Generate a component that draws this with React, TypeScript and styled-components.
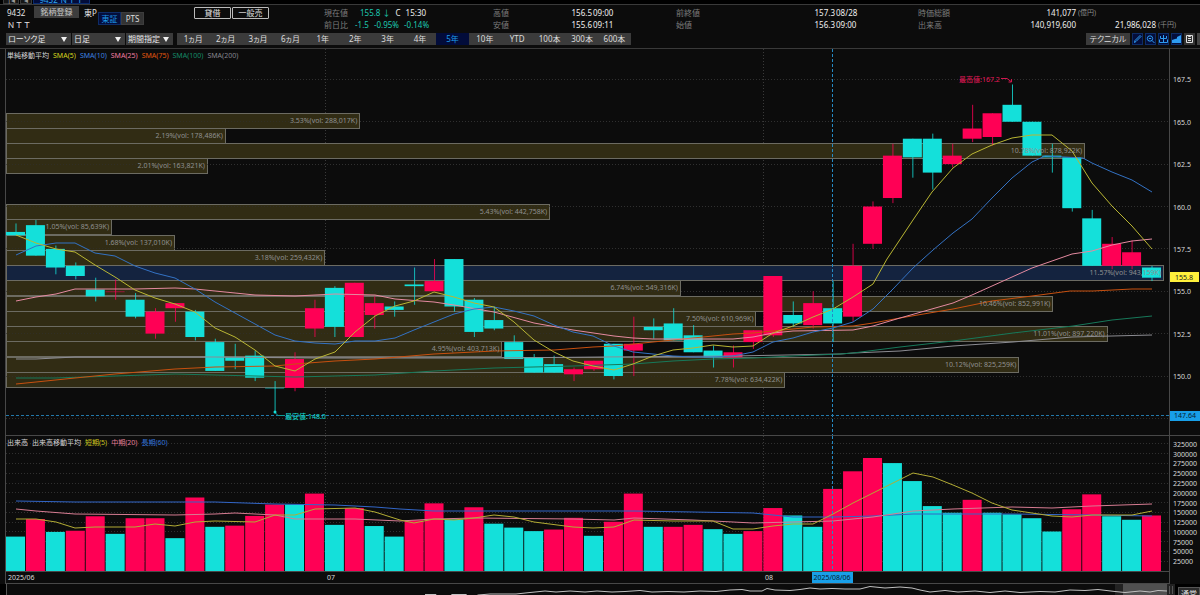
import React, { useState } from "react";
import styled, { createGlobalStyle } from "styled-components";

const UP = "#ff0055";
const DOWN = "#14e0da";
const QUOTE_DOWN = "#1cc8b0";

const GlobalStyle = createGlobalStyle`
  body {
    margin: 0;
    background: #0c0c0c;
    color: #e4e4e4;
    font-family: "Noto Sans", "Noto Sans CJK JP", sans-serif;
    font-size: 8px;
    line-height: 12px;
  }

  button,
  select {
    font: inherit;
    margin: 0;
  }
`;

const Page = styled.main`
  overflow: hidden;
`;

const TabStrip = styled.nav`
  display: flex;
  align-items: flex-end;
  gap: 1px;
  height: 4px;
  padding-left: 3px;
  overflow: hidden;
  background: #000;
  border-bottom: 1px solid #3a3a3a;
`;

const StripTab = styled.button<{ $active?: boolean }>`
  height: 9px;
  padding: 0 ${(p) => (p.$active ? "5px" : "3px")};
  border: 1px solid ${(p) => (p.$active ? "#0a2a6c" : "#3a3a3a")};
  background: ${(p) => (p.$active ? "#020c3a" : "#161616")};
  color: ${(p) => (p.$active ? "#2fa8f0" : "#999")};
  line-height: 7px;
`;

const Header = styled.header`
  display: grid;
  grid-template-columns: 324fr 169fr 183fr 242fr 282fr;
  height: 28px;
`;

const Identity = styled.div`
  display: grid;
  grid-template-columns: 27px 50px 14px 96px 1fr;
  padding: 1px 0 0 7px;
`;

const Code = styled.div`
  padding-top: 1px;
  white-space: nowrap;
`;

const RegisterButton = styled.button`
  height: 12px;
  width: 45px;
  padding: 0;
  border: 0;
  background: #3d3d3d;
  color: #c8c8c8;
  line-height: 12px;
`;

const MarketToggle = styled.div`
  display: flex;
  align-self: start;
  height: 13px;
  margin-top: 6px;
`;

const MarketButton = styled.button<{ $active?: boolean }>`
  width: 23px;
  padding: 0;
  border: 1px solid ${(p) => (p.$active ? "#0e2c66" : "#3d3d3d")};
  background: ${(p) => (p.$active ? "#040e3c" : "#333")};
  color: ${(p) => (p.$active ? "#1d9be8" : "#ddd")};
  line-height: 11px;
`;

const Badges = styled.div`
  display: flex;
  gap: 1px;
  padding-top: 1px;
`;

const Badge = styled.span`
  box-sizing: border-box;
  width: 37px;
  height: 12px;
  border: 1px solid #bbb;
  border-radius: 1px;
  line-height: 10px;
  text-align: center;
`;

const Quotes = styled.dl<{ $columns: string }>`
  display: grid;
  grid-template-columns: ${(p) => p.$columns};
  align-content: start;
  margin: 0;
  padding-top: 2px;
  white-space: nowrap;

  dt {
    color: #7d7d7d;
  }
`;

const Value = styled.dd`
  margin: 0;
  color: #f0f0f0;
  text-align: right;
`;

const Aside = styled.dd`
  margin: 0;
  padding-left: 1px;
  color: #f0f0f0;
`;

const Unit = styled.dd`
  margin: 0;
  padding-left: 2px;
  color: #8a8a8a;
  font-size: 7px;
`;

const Change = styled.dd<{ $indent: number; $gap: number }>`
  display: flex;
  gap: ${(p) => p.$gap}px;
  margin: 0;
  padding-left: ${(p) => p.$indent}px;
  color: ${QUOTE_DOWN};

  b {
    color: #f0f0f0;
    font-weight: 400;
  }
`;

const Toolbar = styled.div`
  display: flex;
  align-items: center;
  height: 12px;
  padding: 0 0 3px 6px;
  border-bottom: 1px solid #3a3a3a;
`;

const SelectBox = styled.div<{ $width: number }>`
  display: grid;
  align-items: center;
  width: ${(p) => p.$width}px;
  margin-right: 1px;
  background: #3b3b3b;

  > * {
    grid-area: 1 / 1;
  }

  svg {
    justify-self: end;
    margin-right: 4px;
    pointer-events: none;
  }

  select {
    appearance: none;
    width: 100%;
    height: 12px;
    padding: 0 0 0 2px;
    border: 0;
    background: transparent;
    color: #e8e8e8;
    font-feature-settings: "palt";
    line-height: 12px;
  }
`;

const Periods = styled.div`
  display: flex;
  width: 38%;
  margin-left: 3px;
  background: #3b3b3b;
`;

const PeriodButton = styled.button<{ $active: boolean }>`
  flex: 1 1 0;
  min-width: 0;
  height: 12px;
  padding: 0;
  border: 0;
  background: ${(p) => (p.$active ? "#020c3a" : "transparent")};
  color: ${(p) => (p.$active ? "#1d9be8" : "#dcdcdc")};
  font-feature-settings: "palt";
  line-height: 12px;
  white-space: nowrap;
`;

const Tools = styled.div`
  display: flex;
  gap: 2px;
  margin-left: auto;
`;

const TechnicalButton = styled.button`
  width: 44px;
  height: 12px;
  padding: 0;
  border: 0;
  background: #3b3b3b;
  color: #dcdcdc;
  font-feature-settings: "palt";
  line-height: 12px;
`;

const ToolButton = styled.button<{ $plain?: boolean }>`
  width: 11px;
  height: 12px;
  padding: 0;
  border: 1px solid ${(p) => (p.$plain ? "#333" : "#0e2c66")};
  background: ${(p) => (p.$plain ? "#333" : "#040e3c")};
  color: ${(p) => (p.$plain ? "#e0e0e0" : "#2d9cf0")};
  overflow: hidden;

  svg {
    display: block;
    width: 9px;
    height: 10px;
  }
`;

const ToolEdge = styled.span`
  width: 3px;
  background: #444;
`;

const Pane = styled.section`
  position: relative;
`;

const Legend = styled.div`
  position: absolute;
  top: 2px;
  left: 7px;
  display: flex;
  gap: 4px;
  font-size: 7px;
  line-height: 10px;
`;

const LegendItem = styled.span<{ $color?: string }>`
  color: ${(p) => p.$color || "#d8d8d8"};
`;

const ChartSvg = styled.svg`
  display: block;
  width: 100%;

  text {
    font-family: "Noto Sans", "Noto Sans CJK JP", sans-serif;
    font-size: 7px;
  }
`;

const Navigator = styled.div`
  display: flex;
  height: 11px;
  overflow: hidden;
  background: #000;
`;

const NavigatorSvg = styled.svg`
  display: block;
  flex: 1;
  height: 11px;
  min-width: 0;
`;

const NormalButton = styled.button`
  width: 22px;
  height: 14px;
  margin: 3px 0 0 3px;
  padding: 0;
  border: 1px solid #555;
  background: #2a2a2a;
  color: #e0e0e0;
  line-height: 12px;
`;

type Candle = [open: number, high: number, low: number, close: number];

// open, high, low, close
const candles: Candle[] = [
  [158.5, 159.0, 158.3, 158.3], [158.9, 159.2, 157.1, 157.1], [157.5, 157.7, 156.0, 156.4],
  [156.5, 156.7, 155.7, 155.9], [155.1, 155.8, 154.4, 154.7], [155.0, 155.7, 154.5, 155.0],
  [154.5, 154.9, 153.4, 153.5], [152.5, 154.0, 152.2, 153.8], [154.0, 154.3, 153.2, 154.3],
  [153.8, 153.9, 152.1, 152.3], [152.0, 152.2, 150.3, 150.3], [151.1, 151.9, 150.4, 150.9],
  [151.2, 151.5, 149.7, 149.9], [149.31, 149.7, 147.9, 149.3], [149.3, 151.4, 149.1, 151.0],
  [152.8, 154.5, 152.3, 154.0], [155.2, 155.3, 152.3, 152.9], [152.3, 155.5, 152.3, 155.5],
  [153.6, 154.7, 152.8, 154.3], [154.1, 154.4, 153.5, 153.9], [155.4, 156.4, 154.2, 155.3],
  [155.0, 156.9, 155.0, 155.6], [156.9, 156.9, 153.8, 154.1], [154.5, 154.6, 152.3, 152.6],
  [153.3, 154.1, 152.7, 152.8], [152.0, 152.4, 151.0, 151.0], [151.1, 151.3, 150.2, 150.2],
  [150.7, 151.2, 150.2, 150.2], [150.1, 150.5, 149.7, 150.4], [150.4, 150.9, 150.3, 150.9],
  [151.9, 151.9, 149.8, 150.0], [151.5, 153.5, 150.0, 151.9], [152.9, 153.4, 152.2, 152.7],
  [153.1, 154.0, 152.1, 152.1], [152.4, 153.0, 151.4, 151.4], [151.5, 151.8, 150.5, 151.1],
  [151.1, 151.8, 150.5, 151.4], [152.0, 152.7, 151.6, 152.7], [152.4, 155.9, 152.3, 155.9],
  [153.6, 154.4, 152.9, 153.1], [153.0, 155.0, 152.8, 154.3], [154.0, 155.6, 152.0, 153.1],
  [153.5, 157.8, 153.2, 156.5], [157.8, 160.3, 157.5, 160.0], [160.5, 163.7, 160.2, 163.0],
  [164.0, 164.0, 161.7, 162.9], [164.0, 164.3, 161.0, 162.0], [162.5, 163.7, 162.3, 163.0],
  [164.0, 166.0, 163.8, 164.6], [164.1, 165.5, 163.6, 165.5], [166.0, 167.2, 165.0, 165.0],
  [165.0, 165.0, 163.0, 163.0], [163.0, 163.7, 162.0, 162.9], [162.9, 162.9, 159.7, 159.9],
  [159.3, 159.8, 156.5, 156.5], [156.5, 158.2, 156.3, 157.8], [156.5, 158.0, 156.3, 157.3],
  [156.4, 156.5, 155.6, 155.8],
];

// thousands of shares, negative = drawn in the down colour
const volumes = [
  -88, 133, -100, 103, 140, -95, 135, 135, -84, 188, -113, 116, 141, 170, -170, 198, -118, 161, -115, -88,
  130, 173, -132, 163, -121, -111, -102, 106, 136, -90, 126, 198, -113, 113, 118, -107, -95, 102, 161, -142,
  -113, 210, 255, 289, -276, -230, -166, -149, 182, -149, -145, -135, -101, 158, 196, -140, -131, 142,
];

type ProfileBin = { percent: string; volume: number; current?: boolean };

// volume by price, from the top bin down
const profile: (ProfileBin | null)[] = [
  { percent: "3.53", volume: 288017 },
  { percent: "2.19", volume: 178486 },
  { percent: "10.78", volume: 878922 },
  { percent: "2.01", volume: 163821 },
  null,
  null,
  { percent: "5.43", volume: 442758 },
  { percent: "1.05", volume: 85639 },
  { percent: "1.68", volume: 137010 },
  { percent: "3.18", volume: 259432 },
  { percent: "11.57", volume: 943159, current: true },
  { percent: "6.74", volume: 549316 },
  { percent: "10.46", volume: 852991 },
  { percent: "7.50", volume: 610969 },
  { percent: "11.01", volume: 897220 },
  { percent: "4.95", volume: 403713 },
  { percent: "10.12", volume: 825259 },
  { percent: "7.78", volume: 634422 },
];

const priceLines = [
  { color: "#8c8c92", points: "16,359 36,359 75,357 215,357 315,358 494,358 600,357 733,356 840,354 853,353 900,351 953,346 1013,342 1072,337 1112,336 1152,335" },
  { color: "#17795a", points: "16,378 55,378 115,376 175,374 295,377 375,375 434,371 494,368 573,366 633,364 673,361 713,359 753,358 793,356 840,354 853,353 900,347 953,341 1013,333 1073,326 1112,320 1152,316" },
  { color: "#c8500f", points: "16,384 36,382 75,378 115,374 175,369 215,367 275,366 295,364 335,361 375,359 434,354 494,351 554,350 593,347 614,346 653,342 693,338 733,334 753,333 793,329 813,327 853,326 873,323 900,318 953,309 992,301 1032,296 1070,291 1093,291 1132,289 1152,289" },
  { color: "#e58aa0", points: "16,301 36,297 56,294 75,289 135,289 175,288 195,289 215,291 235,293 255,295 295,296 315,295 335,294 375,295 395,299 434,302 454,305 494,312 534,323 573,330 614,336 633,338 653,339 733,339 753,337 773,333 793,331 853,330 873,326 900,318 953,303 972,295 992,286 1012,277 1032,268 1052,261 1072,254 1092,251 1112,245 1132,241 1152,239" },
  { color: "#3372c4", points: "16,255 36,246 56,243 75,243 95,253 115,256 135,266 155,273 175,278 195,289 215,302 235,313 255,324 275,335 295,341 315,343 335,344 355,341 375,341 395,338 414,330 434,322 454,314 474,309 494,307 514,311 534,316 554,325 573,332 593,336 614,346 633,352 653,354 673,356 693,357 713,357 733,356 753,352 773,342 793,338 813,332 833,328 853,322 873,309 893,289 913,268 933,250 953,233 972,219 992,198 1012,178 1032,162 1045,156 1083,158 1092,163 1112,172 1132,180 1152,192" },
  { color: "#b9b633", points: "16,235 36,243 56,249 75,252 95,265 115,277 135,290 155,298 175,304 195,312 215,328 235,337 255,350 275,366 295,371 315,359 335,352 355,332 375,316 395,306 414,301 434,292 454,297 474,303 494,307 514,322 534,340 554,352 573,361 593,366 614,370 633,364 653,356 673,350 693,348 713,345 733,347 753,346 773,333 793,326 813,317 833,309 853,297 873,284 887,259 913,220 932,192 953,168 972,154 992,145 1012,138 1032,135 1052,135 1072,151 1092,183 1112,206 1132,226 1152,249" },
];

const volumeLines = [
  { color: "#3266c8", points: "16,501 75,502 215,502 275,504 335,505 375,507 400,509 434,511 634,511 693,512 753,513 793,517 833,517 873,516 913,514 1012,514 1092,515 1152,516" },
  { color: "#d77c92", points: "16,509 36,511 75,514 175,515 215,514 235,513 275,515 295,519 355,519 400,521 434,519 474,518 573,519 614,520 634,518 693,520 733,522 753,523 793,522 833,521 873,517 913,511 953,509 1012,507 1052,508 1092,506 1152,504" },
  { color: "#b3ac34", points: "16,519 36,519 56,522 75,528 95,527 135,527 155,524 175,526 195,522 215,521 255,522 275,515 295,515 315,509 355,508 375,512 400,520 414,523 434,519 454,520 474,518 494,515 514,517 534,522 573,527 593,528 614,527 634,520 673,521 713,521 733,529 753,529 773,526 793,524 813,524 833,514 853,503 873,493 893,483 913,473 933,477 953,485 972,493 992,503 1012,510 1032,513 1052,516 1072,517 1092,515 1132,515 1152,511" },
];

const priceTicks = [167.5, 165, 162.5, 160, 157.5, 155, 152.5, 150, 147.5];
const volumeTicks = Array.from({ length: 13 }, (_, i) => (i + 1) * 25);
const months = [
  { label: "2025/06", x: 6 },
  { label: "07", x: 325 },
  { label: "08", x: 763 },
];
const periods = ["1ヵ月", "2ヵ月", "3ヵ月", "6ヵ月", "1年", "2年", "3年", "4年", "5年", "10年", "YTD", "100本", "300本", "600本"];

const PLOT_LEFT = 6;
const PLOT_RIGHT = 1169;
const CURSOR_X = 832.5;

const xOf = (i: number) => 16 + i * 19.93;
const priceY = (price: number) => 376 - (price - 150) * 16.95;
const volumeY = (volume: number) => 571 - volume * 0.391;

function GridLine({ y }: { y: number }) {
  return <line x1={PLOT_LEFT} x2={PLOT_RIGHT} y1={y} y2={y} stroke="#303030" strokeDasharray="1 2" shapeRendering="crispEdges" />;
}

function MonthLines({ top, bottom }: { top: number; bottom: number }) {
  return <g stroke="#3a3a3a" strokeDasharray="1 2">
    {months.slice(1).map((m) => <line key={m.label} x1={m.x + 0.5} x2={m.x + 0.5} y1={top} y2={bottom} />)}
  </g>;
}

function PriceChart() {
  const bars = profile.map((bin, i) => bin && {
    ...bin,
    y: 112.7 + i * 15.25,
    width: (bin.volume / 943159) * 1157,
  });

  return <ChartSvg viewBox="0 49 1200 387" role="img" aria-label="株価チャート">
    {priceTicks.map((t) => <GridLine key={t} y={priceY(t)} />)}
    <MonthLines top={49} bottom={435} />

    {bars.map((b) => b && (
      <rect
        key={b.percent}
        x={PLOT_LEFT + 0.5}
        y={Math.round(b.y) + 0.5}
        width={Math.round(b.width)}
        height={15}
        fill={b.current ? "#14233f" : "#312c14"}
        stroke="#6c6b62"
      />
    ))}
    <g opacity="0.6">
      {priceTicks.slice(0, -1).map((t) => <GridLine key={t} y={priceY(t)} />)}
    </g>

    {candles.map(([open, high, low, close], i) => {
      const color = close >= open ? UP : DOWN;
      const top = priceY(Math.max(open, close));
      const height = Math.max(priceY(Math.min(open, close)) - top, 1);
      return <g key={i} fill={color}>
        <rect x={xOf(i) - 0.5} y={priceY(high)} width={1} height={priceY(low) - priceY(high)} opacity={0.8} />
        <rect x={xOf(i) - 10} y={top} width={19} height={height} opacity={height > 1 ? 1 : 0.5} />
      </g>;
    })}

    {priceLines.map((l) => <polyline key={l.color} points={l.points} fill="none" stroke={l.color} />)}

    {bars.map((b) => b && (
      <text key={b.percent} x={PLOT_LEFT + b.width - 2} y={b.y + 10} textAnchor="end" fill="#909090">
        {`${b.percent}%(vol: ${b.volume.toLocaleString("en-US")}K)`}
      </text>
    ))}

    <line x1={CURSOR_X} x2={CURSOR_X} y1={49} y2={435} stroke="#258bc4" strokeDasharray="3 2" />
    <line x1={PLOT_LEFT} x2={PLOT_RIGHT} y1={415.5} y2={415.5} stroke="#2379ab" strokeDasharray="3 2" />

    <text x={959} y={82} fill="#e8185a">最高値:167.2</text>
    <path d="M1001 78.5h6l4 3M1011.5 79v3h-3" fill="none" stroke="#d4164f" />
    <text x={285} y={419} fill={DOWN}>最安値:148.0</text>
    <path d="M285 415.5h-7l-3-3" fill="none" stroke="#0e9c98" />
    <circle cx={275} cy={412} r={1.5} fill={DOWN} />

    <path d="M5.5 49V436M1169.5 49V436M5 435.5H1200" stroke="#484848" fill="none" />
    <g fill="#d8d8d8">
      {priceTicks.map((t) => <text key={t} x={1173} y={priceY(t) + 3}>{t.toFixed(1)}</text>)}
    </g>
    <rect x={1170} y={272} width={29} height={10} fill="#fff13c" />
    <text x={1184} y={280} textAnchor="middle" fill="#222">155.8</text>
    <rect x={1170} y={411} width={30} height={10} fill="#189fe8" />
    <text x={1185} y={418} textAnchor="middle" fill="#071c30">147.64</text>
  </ChartSvg>;
}

function VolumeChart() {
  return <ChartSvg viewBox="0 436 1200 148" role="img" aria-label="出来高チャート">
    {volumeTicks.map((t) => <GridLine key={t} y={volumeY(t)} />)}
    <MonthLines top={436} bottom={573} />
    {volumes.map((v, i) => (
      <rect
        key={i}
        x={xOf(i) - 10}
        y={volumeY(Math.abs(v))}
        width={19}
        height={Math.abs(v) * 0.391}
        fill={v > 0 ? UP : DOWN}
      />
    ))}
    {volumeLines.map((l) => <polyline key={l.color} points={l.points} fill="none" stroke={l.color} />)}
    <line x1={CURSOR_X} x2={CURSOR_X} y1={436} y2={571} stroke="#258bc4" strokeDasharray="3 2" />
    <path d="M5.5 436V584M1169.5 436V584M5 571.5H1169M5 583.5H1170" stroke="#484848" fill="none" />
    <g fill="#d8d8d8">
      {volumeTicks.map((t) => <text key={t} x={1173} y={volumeY(t) + 3}>{t * 1000}</text>)}
      {months.map((m) => <text key={m.label} x={m.x + 2} y={580}>{m.label}</text>)}
    </g>
    <rect x={812} y={572} width={41} height={11} fill="#189fe8" />
    <text x={832} y={580} textAnchor="middle" fill="#071c30">2025/08/06</text>
  </ChartSvg>;
}

function SelectField({ label, width, options }: { label: string; width: number; options: string[] }) {
  return <SelectBox $width={width}>
    <select aria-label={label}>
      {options.map((o) => <option key={o}>{o}</option>)}
    </select>
    <svg width="6" height="5" viewBox="0 0 6 5"><path d="M0 0h6L3 5z" fill="#f0f0f0" /></svg>
  </SelectBox>;
}

export default function App() {
  const [period, setPeriod] = useState("5年");
  const [market, setMarket] = useState("東証");

  return <Page>
    <GlobalStyle />
    <TabStrip>
      <StripTab>|◂</StripTab>
      <StripTab>◂</StripTab>
      <StripTab $active>9432 ＮＴＴ</StripTab>
    </TabStrip>

    <Header>
      <Identity>
        <Code>
          9432
          <div>ＮＴＴ</div>
        </Code>
        <RegisterButton>銘柄登録</RegisterButton>
        <Code>東P</Code>
        <MarketToggle>
          {["東証", "PTS"].map((m) => (
            <MarketButton key={m} $active={market === m} onClick={() => setMarket(m)}>{m}</MarketButton>
          ))}
        </MarketToggle>
        <Badges>
          <Badge>貸借</Badge>
          <Badge>一般売</Badge>
        </Badges>
      </Identity>

      <Quotes $columns="24px 1fr">
        <dt>現在値</dt>
        <Change $indent={12} $gap={5}>
          <span>155.8 ↓</span>
          <b>C</b>
          <b>15:30</b>
        </Change>
        <dt>前日比</dt>
        <Change $indent={7} $gap={5}>
          <span>-1.5</span>
          <span>-0.95%</span>
          <span>-0.14%</span>
        </Change>
      </Quotes>
      <Quotes $columns="16px 83px 1fr">
        <dt>高値</dt>
        <Value>156.5</Value>
        <Aside>09:00</Aside>
        <dt>安値</dt>
        <Value>155.6</Value>
        <Aside>09:11</Aside>
      </Quotes>
      <Quotes $columns="24px 135px 1fr">
        <dt>前終値</dt>
        <Value>157.3</Value>
        <Aside>08/28</Aside>
        <dt>始値</dt>
        <Value>156.3</Value>
        <Aside>09:00</Aside>
      </Quotes>
      <Quotes $columns="32px 126px 80px 1fr">
        <dt>時価総額</dt>
        <Value>141,077</Value>
        <Unit>(億円)</Unit>
        <dd />
        <dt>出来高</dt>
        <Value>140,919,600</Value>
        <Value>21,986,028</Value>
        <Unit>(千円)</Unit>
      </Quotes>
    </Header>

    <Toolbar>
      <SelectField label="チャート種類" width={65} options={["ローソク足", "ラインチャート"]} />
      <SelectField label="足種" width={53} options={["日足", "週足", "月足"]} />
      <SelectField label="期間" width={47} options={["期間指定"]} />
      <Periods>
        {periods.map((p) => (
          <PeriodButton key={p} $active={p === period} onClick={() => setPeriod(p)}>{p}</PeriodButton>
        ))}
      </Periods>
      <Tools>
        <TechnicalButton>テクニカル</TechnicalButton>
        <ToolButton aria-label="描画">
          <svg viewBox="0 0 9 10" fill="none" stroke="currentColor"><path d="M1.5 8.5l.5-2 5-5 1 1-5 5z" /></svg>
        </ToolButton>
        <ToolButton aria-label="拡大">
          <svg viewBox="0 0 9 10" fill="none" stroke="currentColor"><circle cx="4" cy="4.5" r="2.7" /><path d="M6 6.5l2.5 2.5M2.8 4.5h2.4" /></svg>
        </ToolButton>
        <ToolButton aria-label="出来高">
          <svg viewBox="0 0 9 10" fill="none" stroke="currentColor"><path d="M4.5 1v7.5M1.5 2v2.5h6V2M.5 5.5v3h8v-3" /></svg>
        </ToolButton>
        <ToolButton aria-label="比較">
          <svg viewBox="0 0 9 10" fill="currentColor"><path d="M0 9V6l3-1 2-.5V3l4-2v8z" /></svg>
        </ToolButton>
        <ToolButton $plain aria-label="保存">
          <svg viewBox="0 0 9 10" fill="none" stroke="currentColor"><path d="M1.5 1.5h6v7h-6zM3 4.5h3M3 6.5h3M3.5 1.5v1h2v-1" /></svg>
        </ToolButton>
        <ToolEdge />
      </Tools>
    </Toolbar>

    <Pane>
      <PriceChart />
      <Legend>
        <LegendItem>単純移動平均</LegendItem>
        <LegendItem $color="#d6d61e">SMA(5)</LegendItem>
        <LegendItem $color="#3d82e0">SMA(10)</LegendItem>
        <LegendItem $color="#f07ca0">SMA(25)</LegendItem>
        <LegendItem $color="#e0570e">SMA(75)</LegendItem>
        <LegendItem $color="#158a68">SMA(100)</LegendItem>
        <LegendItem $color="#85858c">SMA(200)</LegendItem>
      </Legend>
    </Pane>

    <Pane>
      <VolumeChart />
      <Legend>
        <LegendItem>出来高</LegendItem>
        <LegendItem>出来高移動平均</LegendItem>
        <LegendItem $color="#c8c31e">短期(5)</LegendItem>
        <LegendItem $color="#e07c96">中期(20)</LegendItem>
        <LegendItem $color="#3372d8">長期(60)</LegendItem>
      </Legend>
    </Pane>

    <Navigator>
      <NavigatorSvg viewBox="0 584 1175 11" preserveAspectRatio="none">
        <rect x={6} y={584} width={1164} height={11} fill="#0c0c0c" />
        <rect x={1115} y={584} width={8} height={11} fill="#222" />
        <rect x={1123} y={584} width={44} height={11} fill="#505050" />
        <rect x={1167} y={584} width={8} height={11} fill="#222" />
        <path d="M6.5 584v11M1169.5 586v8M1172.5 586v8" stroke="#555" />
        <polyline
          points="425,594.5 436,594.5 437,596 450,596 452,594.5 466,594.5 468,596 476,596 478,595 490,594 516,594 530,592.5 545,591 556,592 570,591 585,592 597,591 612,592 625,591.5 640,590.5 652,592 668,591.5 684,592 700,591 716,591.5 730,590 742,589.5 750,591 762,591 767,588.5 775,590 790,590.5 800,589.5 810,588 820,589 832,588.5 845,589 860,589 870,586.5 885,588 900,587 912,588 920,590 930,592 945,590.5 958,592 975,591 990,592.5 1005,591 1020,592.5 1040,591.5 1055,592 1070,590 1085,590.5 1098,589.5 1115,591.5 1125,592.5 1140,591 1150,592 1158,590.5 1167,591"
          fill="none"
          stroke="#c0c0c0"
        />
      </NavigatorSvg>
      <NormalButton>通常</NormalButton>
    </Navigator>
  </Page>;
}
